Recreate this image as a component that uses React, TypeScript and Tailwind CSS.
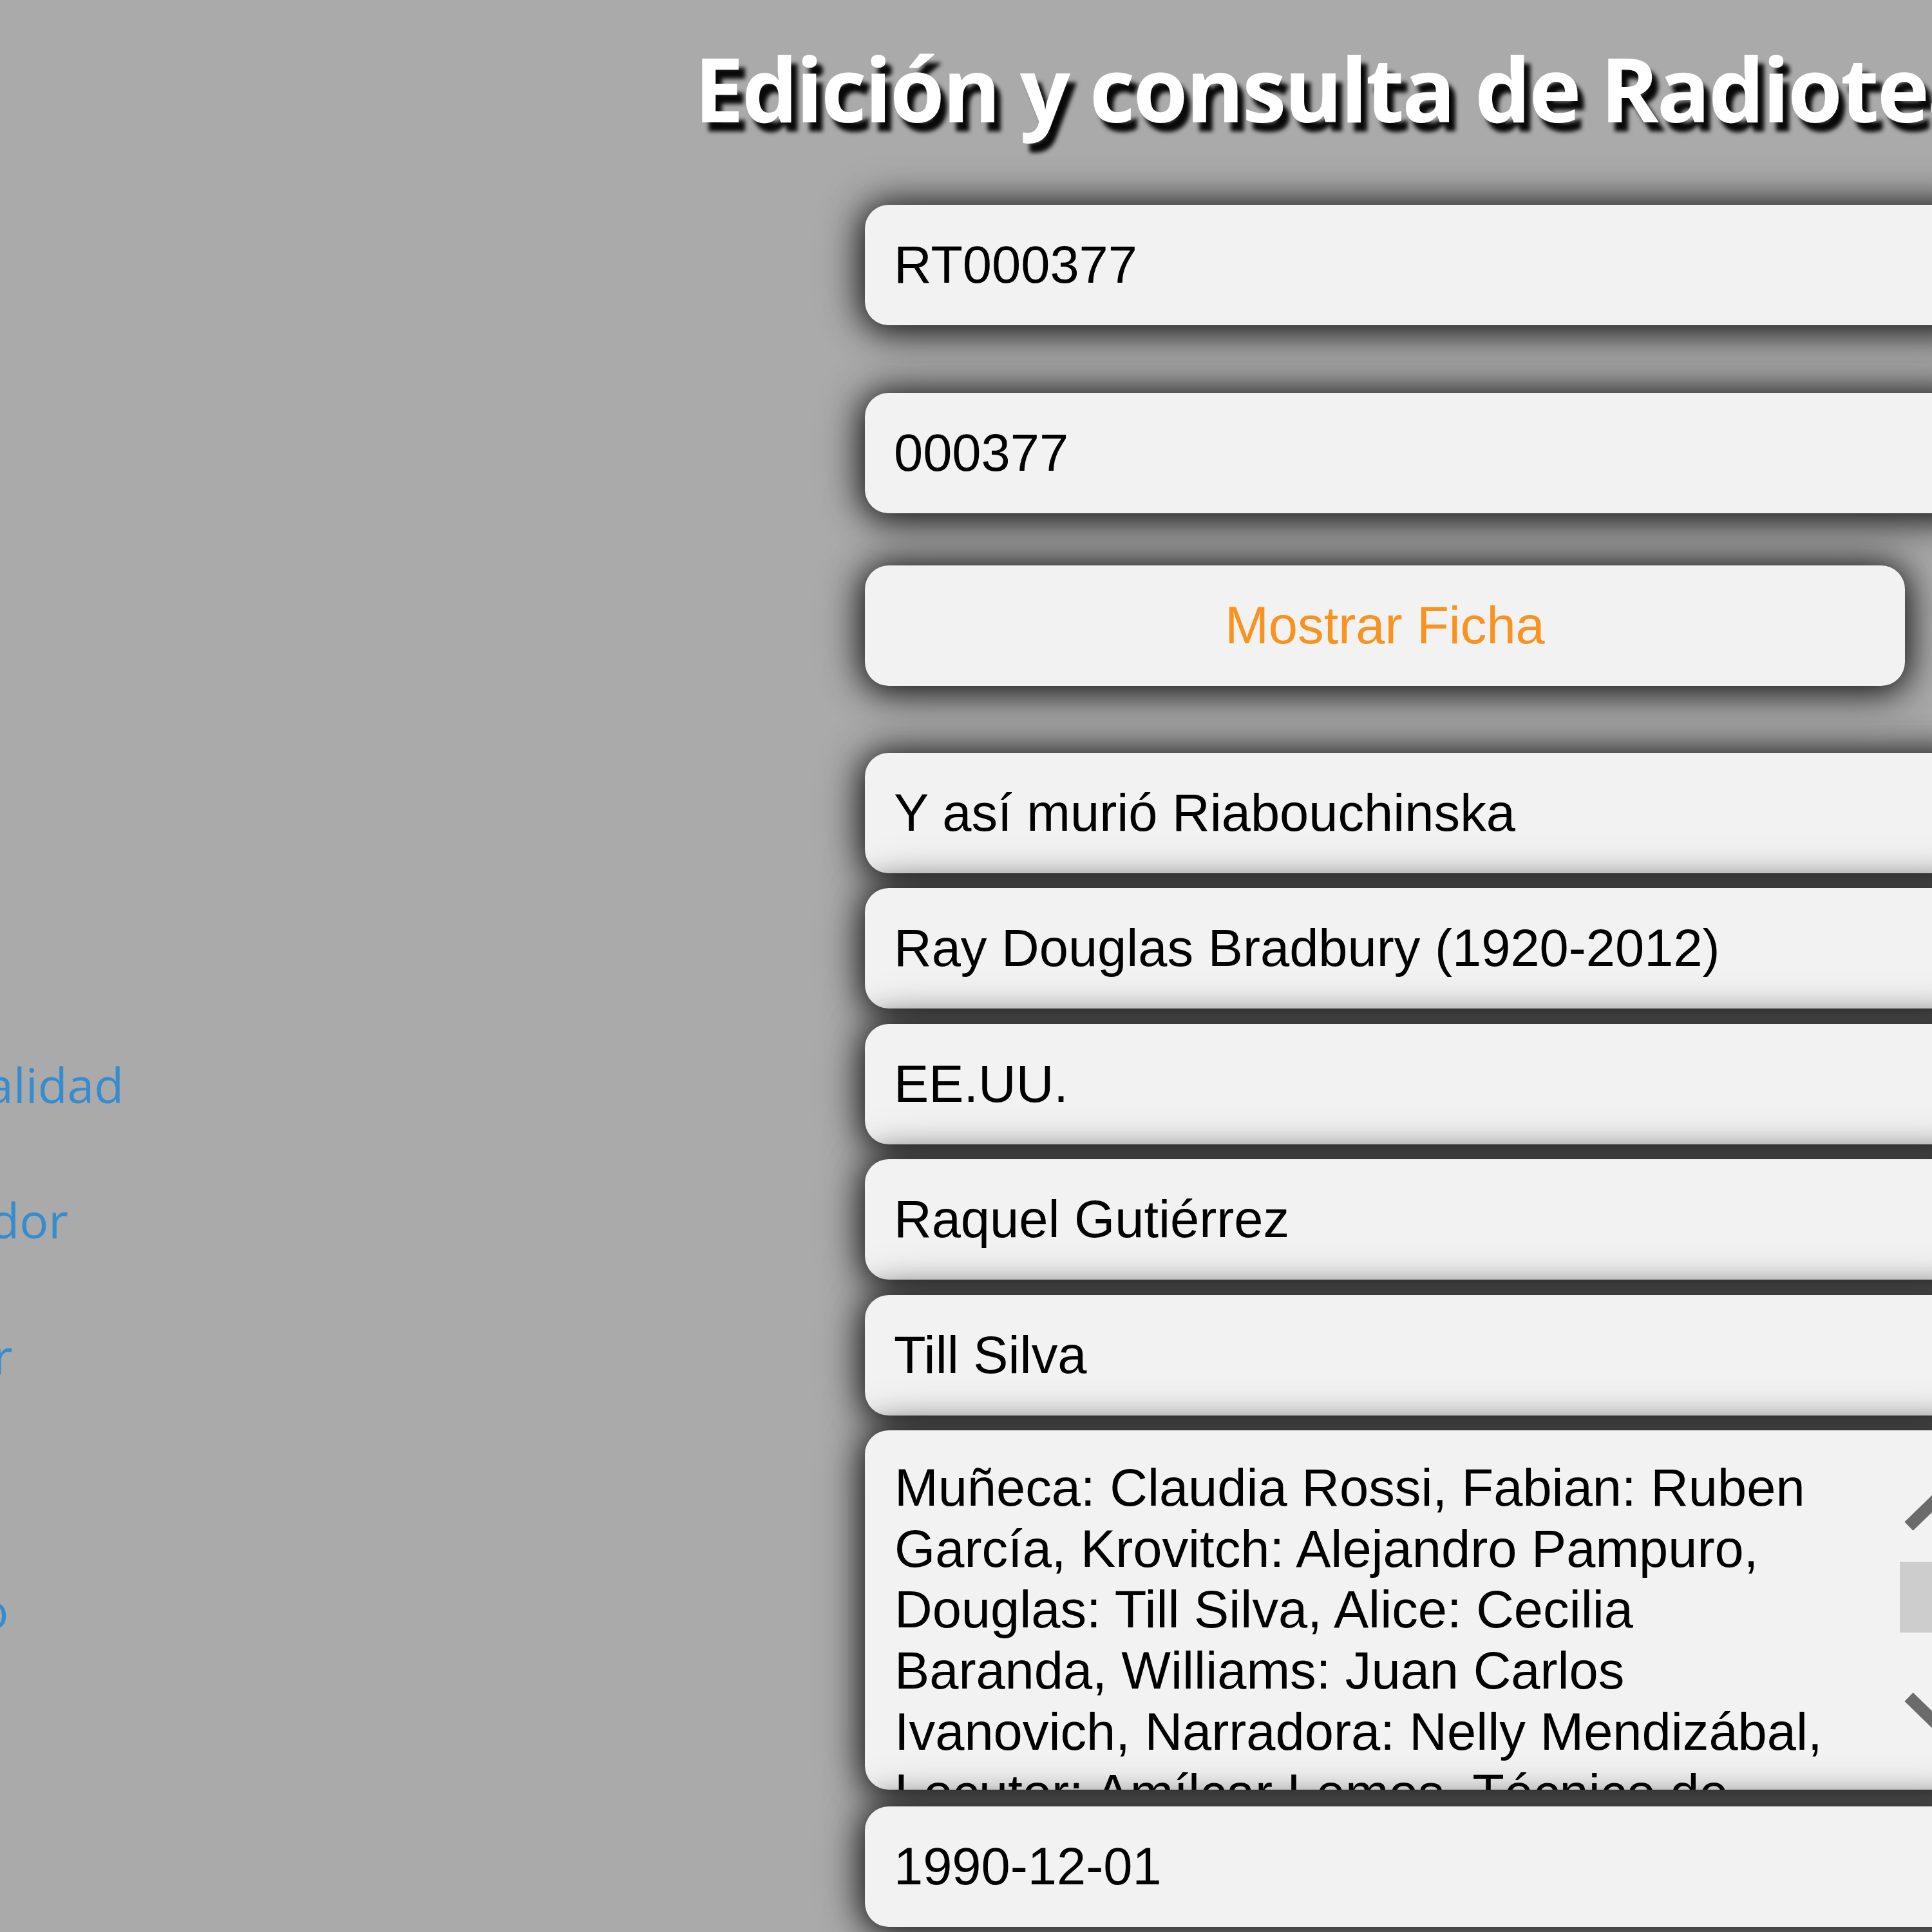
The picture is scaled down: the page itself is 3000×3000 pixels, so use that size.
import React from "react";

type Row = {
  label: string;
  value: string;
  mt: string;
};

// filas simples (input de una línea) del formulario de la ficha
const TOP_ROWS: Row[] = [
  { label: "Código", value: "RT000377", mt: "mt-[88px]" },
  { label: "", value: "000377", mt: "mt-[105px]" },
];

const DATA_ROWS: Row[] = [
  { label: "Título", value: "Y así murió Riabouchinska", mt: "mt-[104px]" },
  { label: "Autor", value: "Ray Douglas Bradbury (1920-2012)", mt: "mt-[23px]" },
  { label: "Nacionalidad", value: "EE.UU.", mt: "mt-[24px]" },
  { label: "Adaptador", value: "Raquel Gutiérrez", mt: "mt-[23px]" },
  { label: "Director", value: "Till Silva", mt: "mt-[24px]" },
];

const REPARTO =
  "Muñeca: Claudia Rossi, Fabian: Ruben García, Krovitch: Alejandro Pampuro, Douglas: Till Silva, Alice: Cecilia Baranda, Williams: Juan Carlos Ivanovich, Narradora: Nelly Mendizábal, Locutor: Amílcar Lemos, Técnico de sonido: Jorge Luna";

const box =
  "h-[187px] shrink-0 rounded-[37px] bg-[#f2f2f2] shadow-[0_5px_52px_4px_rgba(0,0,0,0.85),0_0_80px_rgba(0,0,0,0.3)]";

function Label({ text }: { text: string }) {
  return (
    <div className="w-[1343px] shrink-0">
      <span className="-ml-[265px] block whitespace-nowrap font-['Open_Sans',sans-serif] text-[75px] leading-[102px] text-[#378ccd]">
        {text}
      </span>
    </div>
  );
}

function Field({ row }: { row: Row }) {
  return (
    <div className={"flex items-center " + row.mt}>
      <Label text={row.label} />
      <div className={box + " flex w-[1730px] items-center px-[45px]"}>
        <span className="whitespace-nowrap">{row.value}</span>
      </div>
    </div>
  );
}

function Chevron({ up }: { up?: boolean }) {
  return (
    <svg width="106" height="60" viewBox="0 0 106 60" className="shrink-0">
      <path
        d={up ? "M14 49 L53 11 L92 49" : "M14 11 L53 49 L92 11"}
        fill="none"
        stroke="#6b6b6b"
        strokeWidth="19"
        strokeLinejoin="miter"
      />
    </svg>
  );
}

function Reparto() {
  return (
    <div className="mt-[23px] flex items-center">
      <Label text="Reparto" />
      <div className={box + " flex h-[558px] w-[1730px] overflow-hidden"}>
        <div className="w-[1517px] shrink-0 pt-[42px] pl-[46px]">{REPARTO}</div>
        <div className="ml-[90px] flex w-[106px] shrink-0 flex-col pt-[100px]">
          <Chevron up />
          <div className="mt-[44px] h-[110px] w-[106px] bg-[#cdcdcd]" />
          <div className="mt-[89px]">
            <Chevron />
          </div>
        </div>
      </div>
    </div>
  );
}

export default function App() {
  return (
    <div className="h-[3000px] w-[3000px] overflow-hidden bg-[#aaaaaa] font-['Liberation_Sans',Arial,sans-serif] text-[81.25px] leading-[94.7px] text-black">
      <h1 className="mt-[43px] pl-[1078px] whitespace-nowrap font-['Open_Sans',sans-serif] text-[137.5px] leading-[187px] font-bold tracking-[-3px] text-white [text-shadow:10px_14px_6px_rgba(0,0,0,0.95)]">
        Edición y consulta de Radioteatros
      </h1>

      {TOP_ROWS.map((r, i) => (
        <Field key={i} row={r} />
      ))}

      <div className="mt-[81px] flex items-center">
        <Label text="" />
        <div className={box + " flex h-[185px] w-[1615px] items-center justify-center text-[#f7931e]"}>
          Mostrar Ficha
        </div>
      </div>

      {DATA_ROWS.map((r, i) => (
        <Field key={i} row={r} />
      ))}

      <Reparto />

      <Field row={{ label: "Fecha", value: "1990-12-01", mt: "mt-[26px]" }} />
    </div>
  );
}
